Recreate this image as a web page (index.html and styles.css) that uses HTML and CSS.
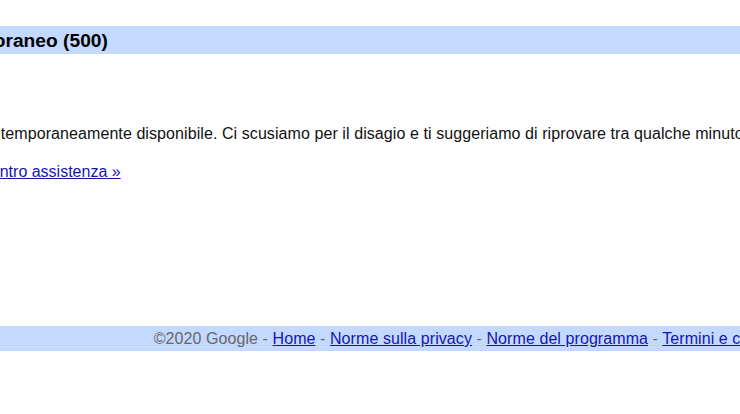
FILE: index.html
```html
<!DOCTYPE html>
<html lang="it">
<head>
<meta charset="utf-8">
<title>Errore temporaneo (500)</title>
<link rel="stylesheet" href="styles.css">
</head>
<body>
<div class="page">
  <h1 class="title">Errore temporaneo (500)</h1>
  <p class="msg">Siamo spiacenti, ma Google AdSense non è temporaneamente disponibile. Ci scusiamo per il disagio e ti suggeriamo di riprovare tra qualche minuto.</p>
  <p class="help">Visita il <a href="#">Centro assistenza »</a></p>
  <div class="footer">©2020 Google - <a href="#">Home</a> - <a href="#">Norme sulla privacy</a> - <a href="#">Norme del programma</a> - <a href="#">Termini e condizioni</a></div>
</div>
</body>
</html>
```
FILE: styles.css
```css
html, body {
  margin: 0;
  padding: 0;
  overflow: hidden;
  background: #fff;
}
body {
  font-family: "Liberation Sans", Arial, sans-serif;
  font-size: 16px;
  color: #111;
}
.page {
  padding-top: 26px;
  white-space: nowrap;
}
.title {
  margin: 0;
  padding: 0;
  height: 28px;
  line-height: 29px;
  font-size: 19.2px;
  font-weight: bold;
  color: #000;
  background: #c3d9ff;
  text-indent: -115px;
}
.msg {
  margin: 71px 0 0;
  line-height: 18px;
  letter-spacing: 0.08px;
  text-indent: -320px;
}
.help {
  margin: 20px 0 0;
  line-height: 18px;
  text-indent: -75.6px;
}
a {
  color: #1515b0;
  text-decoration: underline;
}
.footer {
  margin-top: 145px;
  width: 958px;
  height: 25px;
  line-height: 26px;
  text-align: center;
  letter-spacing: 0.08px;
  color: #676767;
  background: #c3d9ff;
}
```
